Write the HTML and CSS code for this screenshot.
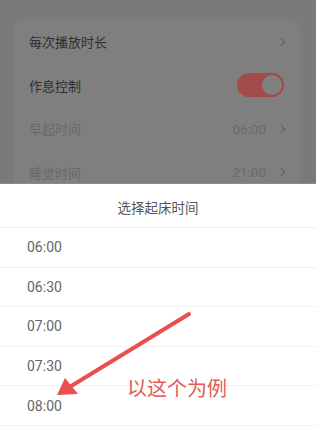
FILE: index.html
```html
<!DOCTYPE html>
<html lang="zh-CN">
<head>
<meta charset="utf-8">
<link rel="stylesheet" href="styles.css">
</head>
<body>
<div class="screen">
  <div class="dim">
    <div class="card">
      <div class="row"><span class="label">每次播放时长</span><span class="right"><span class="chev"></span></span></div>
      <div class="row"><span class="label">作息控制</span><span class="toggle"><span class="knob"></span></span></div>
      <div class="row disabled"><span class="label">早起时间</span><span class="right"><span class="val">06:00</span><span class="chev"></span></span></div>
      <div class="row disabled"><span class="label">睡觉时间</span><span class="right"><span class="val">21:00</span><span class="chev"></span></span></div>
    </div>
  </div>
  <div class="sheet">
    <div class="sheet-title">选择起床时间</div>
    <div class="opt">06:00</div>
    <div class="opt">06:30</div>
    <div class="opt">07:00</div>
    <div class="opt">07:30</div>
    <div class="opt">08:00</div>
  </div>
  <svg class="arrow" width="320" height="436" viewBox="0 0 320 436">
    <line x1="189" y1="314" x2="68" y2="388" stroke="#e8504f" stroke-width="4" stroke-linecap="round"/>
    <polygon points="57,395 65,378 78,394" fill="#e8504f"/>
  </svg>
  <div class="note">以这个为例</div>
</div>
</body>
</html>
```
FILE: styles.css
```css
html, body {
  margin: 0;
  padding: 0;
  background: #ffffff;
}
body {
  font-family: Roboto, "Noto Sans CJK SC", sans-serif;
}
.screen {
  position: relative;
  width: 320px;
  height: 436px;
  overflow: hidden;
}
.dim {
  width: 316px;
  height: 184px;
  box-sizing: border-box;
  background: #7a7a7a;
  padding: 20px 16px 0 14px;
  border-bottom: 1px solid #8a8a8a;
}
.card {
  background: #7f7f7f;
  border-radius: 8px 8px 0 0;
  height: 100%;
}
.row {
  height: 43.5px;
  display: flex;
  align-items: center;
  justify-content: space-between;
  padding: 0 14px 0 15px;
  font-size: 13px;
  color: #2e2e2e;
}
.row.disabled {
  color: #696969;
}
.right {
  display: flex;
  align-items: center;
  gap: 12px;
}
.val {
  font-size: 13.5px;
  color: #6a6a6a;
}
.chev {
  width: 5px;
  height: 5px;
  border-right: 1.5px solid #5e5e5e;
  border-top: 1.5px solid #5e5e5e;
  transform: rotate(45deg);
  margin-right: 2px;
}
.toggle {
  width: 47px;
  height: 24px;
  border-radius: 12px;
  background: #a24b49;
  display: flex;
  align-items: center;
  justify-content: flex-end;
  padding: 0 2px;
  box-sizing: border-box;
  margin-right: 2px;
}
.knob {
  width: 20px;
  height: 20px;
  border-radius: 50%;
  background: #808080;
}
.sheet {
  width: 316px;
  background: #ffffff;
}
.sheet-title {
  height: 44px;
  display: flex;
  align-items: center;
  justify-content: center;
  font-size: 13.5px;
  color: #555555;
  border-bottom: 1px solid #f2f2f2;
  box-sizing: border-box;
  padding-top: 2px;
}
.opt {
  height: 39.6px;
  box-sizing: border-box;
  border-bottom: 1px solid #f2f2f2;
  display: flex;
  align-items: center;
  padding-left: 27px;
  font-size: 14px;
  color: #666666;
}
.arrow {
  position: absolute;
  left: 0;
  top: 0;
}
.note {
  position: absolute;
  left: 127px;
  top: 376px;
  font-size: 20px;
  line-height: 24px;
  color: #e35c5a;
  font-family: "Noto Sans CJK SC", sans-serif;
}
```
